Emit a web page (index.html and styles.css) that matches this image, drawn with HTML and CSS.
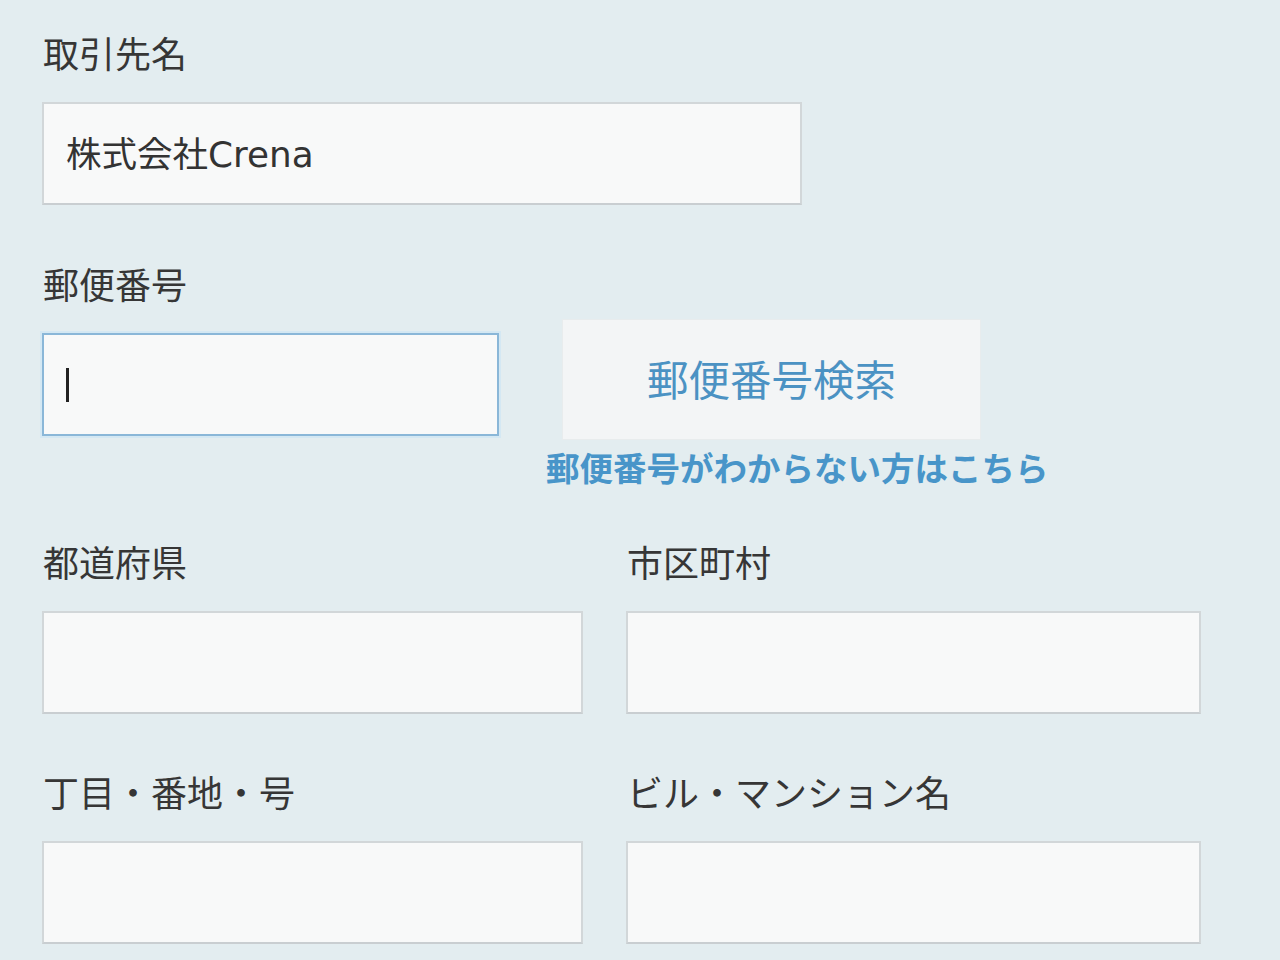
FILE: index.html
```html
<!DOCTYPE html>
<html lang="ja">
<head>
<meta charset="utf-8">
<title>取引先情報</title>
<link rel="stylesheet" href="styles.css">
</head>
<body>
<form class="form">
  <div class="group">
    <div class="label">取引先名</div>
    <div class="field field-name">株式会社<span class="latin">Crena</span></div>
  </div>

  <div class="group">
    <div class="label label-zip">郵便番号</div>
    <div class="zip-row">
      <div class="field field-zip is-focus"><span class="caret"></span></div>
      <div class="zip-side">
        <div class="zip-btn">郵便番号検索</div>
        <a class="zip-link">郵便番号がわからない方はこちら</a>
      </div>
    </div>
  </div>

  <div class="grid grid-first">
    <div class="col">
      <div class="label">都道府県</div>
      <div class="field"></div>
    </div>
    <div class="col">
      <div class="label">市区町村</div>
      <div class="field"></div>
    </div>
  </div>

  <div class="grid">
    <div class="col">
      <div class="label">丁目・番地・号</div>
      <div class="field"></div>
    </div>
    <div class="col">
      <div class="label">ビル・マンション名</div>
      <div class="field"></div>
    </div>
  </div>
</form>
</body>
</html>
```

FILE: styles.css
```css
html, body {
  margin: 0;
  padding: 0;
  background: #e3edf0;
  height: 100%;
}
body {
  font-family: "Noto Sans CJK JP", "Noto Sans", sans-serif;
  color: #333;
  overflow: hidden;
}
.form {
  padding: 28px 0 0 42px;
}
.label {
  font-size: 36px;
  line-height: 48px;
  height: 48px;
  margin: 0 0 26px 1px;
  color: #363636;
}
.group + .group {
  margin-top: 54px;
}
.field {
  box-sizing: border-box;
  height: 103px;
  background: #f8f9f9;
  border: 2px solid #d2d7d9;
  border-bottom-color: #c9ced1;
  font-size: 35.5px;
  line-height: 95px;
  padding-left: 22px;
  color: #333;
}
.latin {
  font-family: "DejaVu Sans", "Noto Sans", sans-serif;
  font-size: 35.8px;
}
.field-name {
  width: 760px;
}
.label-zip {
  margin-bottom: 12px;
}
.zip-row {
  display: flex;
  align-items: flex-start;
}
.field-zip {
  width: 457px;
  margin-top: 14px;
  display: flex;
  align-items: center;
}
.field.is-focus {
  border-color: #8ab7d8;
  box-shadow: 0 0 0 2px #d4e8f3;
}
.caret {
  display: block;
  width: 3px;
  height: 34px;
  background: #222;
}
.zip-side {
  margin-left: 47px;
  display: flex;
  flex-direction: column;
}
.zip-btn {
  margin-left: 16px;
  width: 419px;
  height: 121px;
  box-sizing: border-box;
  background: #f3f5f6;
  border: 1px solid #e8eced;
  color: #4b92c3;
  font-size: 41.5px;
  text-align: center;
  line-height: 117px;
}
.zip-link {
  margin-top: 7px;
  font-size: 33.5px;
  line-height: 40px;
  font-weight: 700;
  color: #4895c9;
  white-space: nowrap;
}
.grid {
  display: grid;
  grid-template-columns: 541px 575px;
  column-gap: 43px;
}
.grid-first {
  margin-top: 50px;
}
.grid + .grid {
  margin-top: 53px;
}
```
